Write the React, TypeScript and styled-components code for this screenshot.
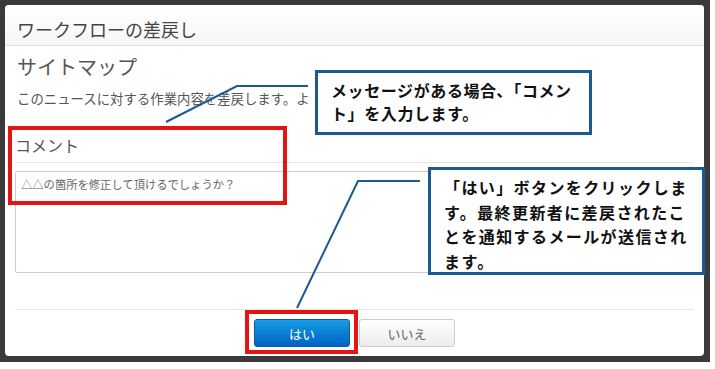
import React from 'react';
import styled, { createGlobalStyle } from 'styled-components';

const GlobalStyle = createGlobalStyle`
  html, body {
    margin: 0;
    padding: 0;
    background: #ffffff;
  }
  body {
    font-family: "Noto Sans CJK JP", "Noto Sans", sans-serif;
  }
`;

const Stage = styled.div`
  position: relative;
  width: 715px;
  height: 369px;
  overflow: hidden;
  background: #ffffff;
`;

const Backdrop = styled.div`
  box-sizing: border-box;
  width: 710px;
  height: 362px;
  padding: 5px 6px 6px 5px;
  background: #3a3a3a;
  display: flex;
`;

const Dialog = styled.div`
  flex: 1;
  display: flex;
  flex-direction: column;
  background: #ffffff;
  border-radius: 4px;
  overflow: hidden;
`;

const Header = styled.div`
  box-sizing: border-box;
  height: 41px;
  padding: 7px 0 0 12px;
  display: flex;
  align-items: center;
  border-bottom: 1px solid #e3e3e3;
  background: linear-gradient(#ffffff, #f6f6f6);
`;

const Title = styled.h1`
  margin: 0;
  font-size: 18px;
  font-weight: normal;
  color: #444444;
  line-height: 20px;
`;

const Body = styled.div`
  flex: 1;
  display: flex;
  flex-direction: column;
  padding: 0 10px;
`;

const SiteName = styled.h2`
  margin: 11px 0 0 2px;
  font-size: 20px;
  font-weight: normal;
  line-height: 20px;
  color: #555555;
`;

// the rest of this sentence sits under the first callout in the screenshot
const Description = styled.p`
  margin: 11px 0 0 2px;
  font-size: 13.4px;
  line-height: 20px;
  color: #555555;
  white-space: nowrap;
`;

const FieldLabel = styled.div`
  margin-top: 27px;
  padding: 0 0 7px 0;
  font-size: 16px;
  line-height: 20px;
  color: #555555;
  border-bottom: 1px solid #e5e5e5;
`;

const CommentBox = styled.textarea`
  box-sizing: border-box;
  margin-top: 8px;
  width: 100%;
  height: 102px;
  padding: 4px 5px;
  border: 1px solid #cccccc;
  border-radius: 2px;
  resize: none;
  font-family: inherit;
  font-size: 11.3px;
  line-height: 16px;
  color: #555555;
  background: #ffffff;
  &::placeholder {
    color: #666666;
  }
`;

const Footer = styled.div`
  margin: auto 10px 0;
  padding: 9px 0;
  border-top: 1px solid #e5e5e5;
  display: flex;
  justify-content: center;
  gap: 9px;
`;

const Button = styled.button<{ $primary?: boolean }>`
  box-sizing: border-box;
  width: 96px;
  height: 28px;
  border-radius: 3px;
  font-family: inherit;
  font-size: 13px;
  cursor: pointer;
  color: ${(p) => (p.$primary ? '#ffffff' : '#666666')};
  border: 1px solid ${(p) => (p.$primary ? '#0b5ca8' : '#cccccc')};
  background: ${(p) =>
    p.$primary
      ? 'linear-gradient(#169ce4, #0062c3)'
      : 'linear-gradient(#ffffff, #ececec)'};
`;

const Highlight = styled.div<{ $x: number; $y: number; $w: number; $h: number }>`
  position: absolute;
  box-sizing: border-box;
  left: ${(p) => p.$x}px;
  top: ${(p) => p.$y}px;
  width: ${(p) => p.$w}px;
  height: ${(p) => p.$h}px;
  border: 4px solid #e31414;
  pointer-events: none;
`;

const Callout = styled.div<{ $x: number; $y: number; $w: number; $h: number; $spacing: number; $lh: number; $pt: number }>`
  position: absolute;
  box-sizing: border-box;
  left: ${(p) => p.$x}px;
  top: ${(p) => p.$y}px;
  width: ${(p) => p.$w}px;
  height: ${(p) => p.$h}px;
  padding: ${(p) => p.$pt}px 0 0 13px;
  border: 3px solid #1a5a94;
  background: #ffffff;
  font-size: 16px;
  font-weight: bold;
  line-height: ${(p) => p.$lh}px;
  letter-spacing: ${(p) => p.$spacing}px;
  color: #111111;
  white-space: nowrap;
`;

const Leaders = styled.svg`
  position: absolute;
  left: 0;
  top: 0;
  pointer-events: none;
`;

export default function App() {
  return (
    <>
      <GlobalStyle />
      <Stage>
        <Backdrop>
          <Dialog>
            <Header>
              <Title>ワークフローの差戻し</Title>
            </Header>
            <Body>
              <SiteName>サイトマップ</SiteName>
              <Description>このニュースに対する作業内容を差戻します。よ</Description>
              <FieldLabel>コメント</FieldLabel>
              <CommentBox placeholder="△△の箇所を修正して頂けるでしょうか？" />
            </Body>
            <Footer>
              <Button $primary>はい</Button>
              <Button>いいえ</Button>
            </Footer>
          </Dialog>
        </Backdrop>

        <Leaders width={715} height={369}>
          <polyline points="308,86 237,86 166,122" fill="none" stroke="#1a5a94" strokeWidth={2} />
          <polyline points="420,181 358,181 297,308" fill="none" stroke="#1a5a94" strokeWidth={2} />
        </Leaders>

        <Highlight $x={8} $y={126} $w={279} $h={79} />
        <Highlight $x={245} $y={310} $w={113} $h={44} />

        <Callout $x={315} $y={70} $w={277} $h={65} $spacing={0.6} $lh={23.5} $pt={5.5}>
          メッセージがある場合､「コメン
          <br />
          ト」を入力します。
        </Callout>
        <Callout $x={428} $y={167} $w={277} $h={108} $spacing={1.4} $lh={24.5} $pt={5}>
          「はい」ボタンをクリックしま
          <br />
          す。最終更新者に差戻されたこ
          <br />
          とを通知するメールが送信され
          <br />
          ます。
        </Callout>
      </Stage>
    </>
  );
}
